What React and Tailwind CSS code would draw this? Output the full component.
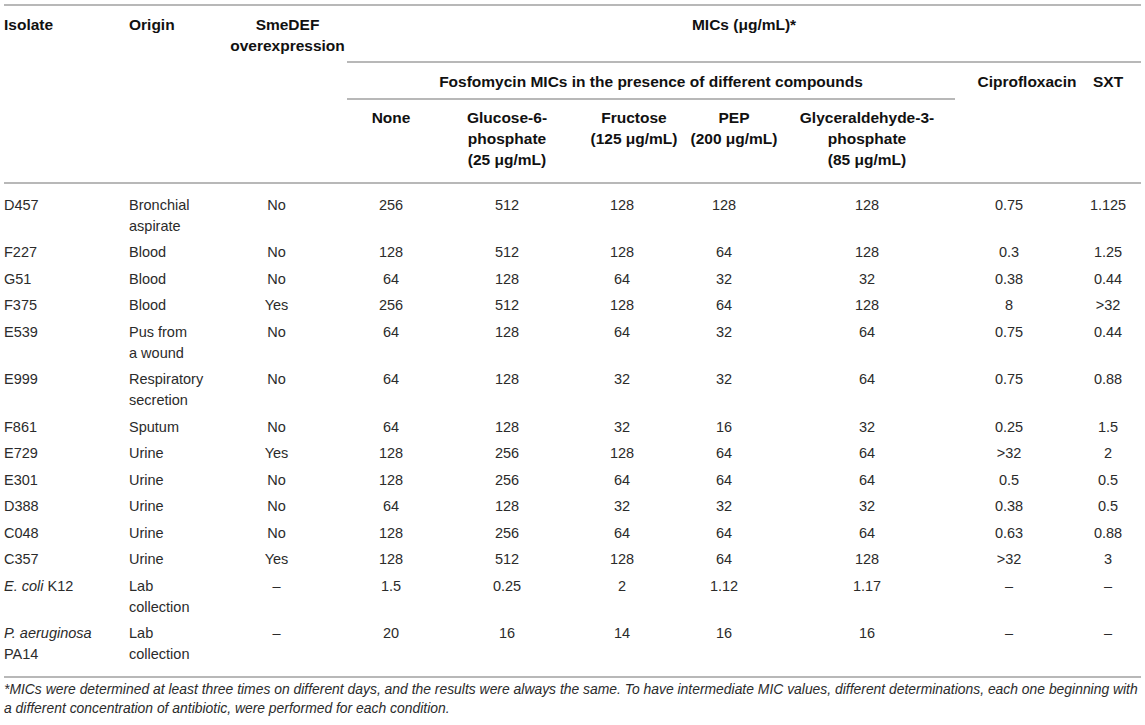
import React from 'react';

const rows = [
    { iso: 'D457', origin: ['Bronchial', 'aspirate'], sme: 'No', v: ['256', '512', '128', '128', '128', '0.75', '1.125'] },
    { iso: 'F227', origin: ['Blood'], sme: 'No', v: ['128', '512', '128', '64', '128', '0.3', '1.25'] },
    { iso: 'G51', origin: ['Blood'], sme: 'No', v: ['64', '128', '64', '32', '32', '0.38', '0.44'] },
    { iso: 'F375', origin: ['Blood'], sme: 'Yes', v: ['256', '512', '128', '64', '128', '8', '>32'] },
    { iso: 'E539', origin: ['Pus from', 'a wound'], sme: 'No', v: ['64', '128', '64', '32', '64', '0.75', '0.44'] },
    { iso: 'E999', origin: ['Respiratory', 'secretion'], sme: 'No', v: ['64', '128', '32', '32', '64', '0.75', '0.88'] },
    { iso: 'F861', origin: ['Sputum'], sme: 'No', v: ['64', '128', '32', '16', '32', '0.25', '1.5'] },
    { iso: 'E729', origin: ['Urine'], sme: 'Yes', v: ['128', '256', '128', '64', '64', '>32', '2'] },
    { iso: 'E301', origin: ['Urine'], sme: 'No', v: ['128', '256', '64', '64', '64', '0.5', '0.5'] },
    { iso: 'D388', origin: ['Urine'], sme: 'No', v: ['64', '128', '32', '32', '32', '0.38', '0.5'] },
    { iso: 'C048', origin: ['Urine'], sme: 'No', v: ['128', '256', '64', '64', '64', '0.63', '0.88'] },
    { iso: 'C357', origin: ['Urine'], sme: 'Yes', v: ['128', '512', '128', '64', '128', '>32', '3'] },
    { iso: <><i>E. coli</i> K12</>, origin: ['Lab', 'collection'], sme: '–', v: ['1.5', '0.25', '2', '1.12', '1.17', '–', '–'] },
    { iso: <><i>P. aeruginosa</i><br />PA14</>, origin: ['Lab', 'collection'], sme: '–', v: ['20', '16', '14', '16', '16', '–', '–'] },
];

// per-column padding so the numbers sit where the source put them
const valuePad = ['', '', 'pr-[24px]', 'pr-[20px]', '', 'pr-[20px]', 'pr-[8px]'];

const line = 'border-[#b8b8b8]';

export default function App() {
    return (
        <div className="bg-white min-h-[725px] pt-[4px] px-[4px] text-[14.5px] leading-[21px] text-[#2b2b2b]" style={{ fontFamily: '"Liberation Sans", Arial, sans-serif' }}>
            <table className={`table-fixed border-collapse w-[1137px] border-t-2 ${line}`}>
                <colgroup>
                    <col className="w-[121px]" />
                    <col className="w-[103px]" />
                    <col className="w-[119px]" />
                    <col className="w-[88px]" />
                    <col className="w-[144px]" />
                    <col className="w-[110px]" />
                    <col className="w-[90px]" />
                    <col className="w-[176px]" />
                    <col className="w-[128px]" />
                    <col className="w-[58px]" />
                </colgroup>
                <thead className={`border-b-2 ${line} text-[#111] text-[15.5px]`}>
                    <tr className="h-[57px]">
                        <th rowSpan={3} className="align-top text-left font-bold pt-[8px]">Isolate</th>
                        <th rowSpan={3} className="align-top text-left font-bold pt-[8px] pl-[4px]">Origin</th>
                        <th rowSpan={3} className="align-top text-center font-bold pt-[8px]">SmeDEF<br />overexpression</th>
                        <th colSpan={7} className={`align-top text-center font-bold pt-[8px] border-b-2 ${line}`}>MICs (μg/mL)*</th>
                    </tr>
                    <tr className="h-[37px]">
                        <th colSpan={5} className={`align-top text-center font-bold pt-[8px] border-b-2 ${line}`}>Fosfomycin MICs in the presence of different compounds</th>
                        <th rowSpan={2} className="align-top text-center font-bold pt-[8px] pl-[16px]">Ciprofloxacin</th>
                        <th rowSpan={2} className="align-top text-center font-bold pt-[8px] pr-[8px]">SXT</th>
                    </tr>
                    <tr className="h-[84px]">
                        <th className="align-top text-center font-bold pt-[7px]">None</th>
                        <th className="align-top text-center font-bold pt-[7px]">Glucose-6-<br />phosphate<br />(25 μg/mL)</th>
                        <th className="align-top text-center font-bold pt-[7px] whitespace-nowrap">Fructose<br />(125 μg/mL)</th>
                        <th className="align-top text-center font-bold pt-[7px] px-0 whitespace-nowrap">PEP<br />(200 μg/mL)</th>
                        <th className="align-top text-center font-bold pt-[7px]">Glyceraldehyde-3-<br />phosphate<br />(85 μg/mL)</th>
                    </tr>
                </thead>
                <tbody className={`border-b-2 ${line}`}>
                    {rows.map((r, i) => {
                        const top = i === 0 ? 'pt-[10.5px]' : 'pt-[2.75px]';
                        const bottom = i === rows.length - 1 ? 'pb-[10.5px]' : 'pb-[2.75px]';
                        return (
                            <tr key={i}>
                                <td className={`align-top ${top} ${bottom}`}>{r.iso}</td>
                                <td className={`align-top pl-[4px] ${top} ${bottom}`}>
                                    {r.origin.map((o, j) => (
                                        <div key={j}>{o}</div>
                                    ))}
                                </td>
                                <td className={`align-top text-center pr-[22px] ${top} ${bottom}`}>{r.sme}</td>
                                {r.v.map((v, j) => (
                                    <td key={j} className={`align-top text-center ${valuePad[j]} ${top} ${bottom}`}>{v}</td>
                                ))}
                            </tr>
                        );
                    })}
                </tbody>
            </table>
            <p className="italic text-[13.9px] leading-[19px] pt-[2px] text-[#2b2b2b] whitespace-nowrap">
                *MICs were determined at least three times on different days, and the results were always the same. To have intermediate MIC values, different determinations, each one beginning with
                <br />
                a different concentration of antibiotic, were performed for each condition.
            </p>
        </div>
    );
}
